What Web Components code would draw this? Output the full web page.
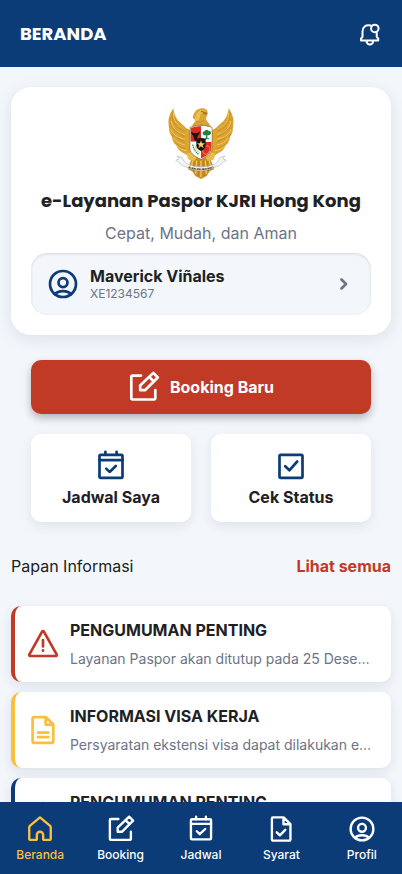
<!DOCTYPE html>
<html lang="id">
<head>
<meta charset="utf-8">
<meta name="viewport" content="width=device-width, initial-scale=1">
<title>Beranda</title>
<style>
  :root {
    --navy: #0b3c78;
    --red: #c13a26;
    --yellow: #fbbf3d;
    --ink: #202124;
    --muted: #6c7486;
    --surface: #f3f7fc;
  }
  body {
    margin: 0;
    background: var(--surface);
    color: var(--ink);
    font-family: Inter, "Liberation Sans", sans-serif;
    font-size: 16px;
    line-height: 24px;
  }
</style>
</head>
<body>
<home-page></home-page>

<script>
const ICONS = {
  user: '<circle cx="16" cy="16" r="13"/><circle cx="16" cy="14.6" r="4.5"/><path d="M8 26.3c1.8-2.400 4.7-3.200 8-3.200s6.200.8 8 3.200"/>',
  edit: '<path d="M13 4.600H4.500a1.200 1.200 0 0 0-1.200 1.200v21.500a1.200 1.200 0 0 0 1.200 1.200h21.600a1.200 1.200 0 0 0 1.200-1.200V19"/><path d="M12.200 19.200v-4.700L25.300 1.900l4.500 4.600-12.800 12.700zM21.200 5.900l4.500 4.600"/>',
  calendar: '<rect x="4.500" y="4.800" width="23" height="23" rx="1.300"/><path d="M4.500 10.200h23M10.400 1.800v3M21.600 1.800v3M11.200 18.600l3.400 3.300 6.200-5.900"/>',
  check: '<rect x="4.500" y="4.800" width="23" height="23" rx="1.300"/><path d="M10.200 16.300l4.200 4 7.800-8.800"/>',
  warning: '<path d="M15.100 3.700 2.400 26.300a1.100 1.100 0 0 0 1 1.700h25.200a1.100 1.100 0 0 0 1-1.700L16.900 3.700a1.050 1.050 0 0 0-1.800 0z"/><path d="M16 12v6.500M16 22.400v.300"/>',
  file: '<path d="M19 3.200H6.800a1.200 1.200 0 0 0-1.200 1.200v23.200a1.200 1.200 0 0 0 1.200 1.200h18.300a1.200 1.200 0 0 0 1.200-1.200V10.500zM18.600 3.200v7.400h7.500M11 18.700h10.300M11 23.200h10.300"/>',
  filecheck: '<path d="M19 2.700H6.800a1.200 1.200 0 0 0-1.200 1.200v24.200a1.200 1.200 0 0 0 1.200 1.200h18.800a1.200 1.200 0 0 0 1.200-1.200V10.500zM18.800 2.700v7.900h7.800M11.200 19.800l3.500 3.400 6.200-6.200"/>',
  home: '<path d="M16 2.800 4.400 12.400a2 2 0 0 0-.700 1.500v13.200a1.400 1.400 0 0 0 1.400 1.400h6.500a.8.8 0 0 0 .8-.8v-5a3.600 3.600 0 0 1 7.200 0v5a.8.8 0 0 0 .8.8h6.500a1.400 1.400 0 0 0 1.400-1.400V13.900a2 2 0 0 0-.700-1.500z"/>',
  bell: '<path d="M17 4.700c-7-1.700-11 2.300-11 8v7L4 22.300v2.400h23v-2.400l-2-2.600v-5.500M11.500 24.900v.8a4.300 4.300 0 0 0 8.600 0v-.8"/><circle cx="22.400" cy="8.600" r="5"/>',
  chevron: '<path d="M13.500 11.500l4.500 4.500-4.500 4.500"/>'
};

class AppIcon extends HTMLElement {
  connectedCallback() {
    this.attachShadow({ mode: 'open' });
    this.shadowRoot.innerHTML = `
      <style>
        :host { display: block; flex: none; width: 32px; height: 32px; }
        svg {
          display: block;
          width: 100%;
          height: 100%;
          fill: none;
          stroke: currentColor;
          stroke-width: 2.700;
          stroke-linecap: round;
          stroke-linejoin: round;
        }
      </style>
      <svg viewBox="0 0 32 32" aria-hidden="true">${ICONS[this.getAttribute('name')]}</svg>
    `;
  }
}
customElements.define('app-icon', AppIcon);

class GarudaEmblem extends HTMLElement {
  connectedCallback() {
    // one wing, mirrored for the other side
    const wing = `
      <path fill="#dca531" d="M38 24C24 43 20 66 26 82c-2 10 2 20 8 27 0 10 5 20 13 26 2 9 8 16 16 20l24 14 17-12V87C91 92 78 87 71 78 62 67 43 62 38 24z"/>
      <g fill="none" stroke="#b8842a" stroke-width="2">
        <path d="M34 35c-1 27 10 47 37 58M28 53c0 26 15 45 43 56M26 76c4 20 19 36 45 46M32 101c8 17 21 26 40 34M43 126c9 11 19 17 34 20"/>
      </g>
      <g fill="none" stroke="#f3cb5e" stroke-width="3">
        <path d="M38 38c0 23 12 38 35 48M31 62c4 20 18 34 41 41M30 87c6 15 20 25 42 30M38 112c8 11 19 18 35 22M49 137c9 9 17 12 30 14"/>
      </g>
      <path fill="none" stroke="#a27426" stroke-width="1" d="M41 50c7 21 19 31 38 38M43 84l30 25M48 112l27 17"/>`;
    this.attachShadow({ mode: 'open' });
    this.shadowRoot.innerHTML = `
      <style>
        :host { display: block; width: 72px; height: 72px; }
        svg { display: block; width: 100%; height: 100%; }
      </style>
      <svg viewBox="13 20 216 216" role="img" aria-label="Garuda Pancasila">
        <g>${wing}</g>
        <g transform="translate(242 0) scale(-1 1)">${wing}</g>
        <path fill="#c88e24" d="M94 170l-12 37 13 6 9 14 17 9 17-9 9-14 13-6-12-37z"/>
        <path stroke="#f0c75a" stroke-width="4" d="M96 181l-5 25M108 181l-3 40M121 181v50M134 181l3 40M146 181l5 25"/>
        <path stroke="#a27426" stroke-width="1.500" d="M102 181l-4 33M115 181l-2 46M128 181l2 46M140 181l4 33"/>
        <path fill="#dca531" d="M88 86l17-26-9-8c3-18 15-30 32-28 9 1 13 7 13 13 0 7-4 12-6 19l21 30z"/>
        <path fill="#ebc054" d="M104 50c3-13 12-22 23-21 5 1 9 4 9 8l-16 4-5 17-13 11z"/>
        <path fill="#a8782a" d="M128 33l13 5-5 5-10-3z"/>
        <path fill="none" stroke="#b8842a" stroke-width="2" d="M104 62l13 4 14-5M98 72l12 5 12-5 12 5 11-6"/>
        <circle cx="124" cy="34" r="2" fill="#3a2911"/>
        <path fill="#e9bc4a" d="M77 160l15-6 17 15-8 13-17-4zM165 160l-15-6-17 15 8 13 17-4z"/>
        <path fill="#f4f5f6" stroke="#b5b8bd" stroke-width="2" d="M84 193c-9-4-16-11-20-22l-15-4 7 8-11 5c11 3 15 17 29 19 7 1 12 4 17 6 20 7 40 7 60 0 5-2 10-5 17-6 14-2 18-16 29-19l-11-5 7-8-15 4c-4 11-11 18-20 22-24 9-50 9-74 0z"/>
        <path fill="none" stroke="#55524e" stroke-width="5" stroke-dasharray="4 1 2 2 6 1" d="M84 200c25 9 49 9 74 0"/>
        <path fill="#fff" stroke="#806136" stroke-width="2" d="M88 81c24-7 43-7 66 0v65c0 15-20 25-33 31-13-6-33-16-33-31z"/>
        <path fill="#df2c22" d="M90 83c12-3 21-5 31-5v46H90zM121 124h31v21c0 14-18 23-31 29z"/>
        <path fill="#fff" d="M121 78c10 0 20 2 31 5v41h-31zM90 124h31v50c-13-6-31-15-31-29z"/>
        <path fill="#191412" d="M92 93c3 5 7 6 12 4 5 2 10 1 13-4 1 8-2 11-6 13l-2 12-4 5-4-5-3-12c-4-2-7-5-6-13z"/>
        <path fill="#218044" d="M127 102c-3-5 1-9 5-9 1-5 10-6 12-1 6-1 9 5 6 9-3 5-9 4-13 3-3 2-8 2-10-2zM136 103h4v11h6v3h-15v-3l5-1z"/>
        <path fill="none" stroke="#378b45" stroke-width="4" stroke-dasharray="4 2" d="M96 133c3 14 9 23 19 30"/>
        <path fill="none" stroke="#c9a547" stroke-width="3" stroke-dasharray="3 2" d="M105 139c1 8 5 14 12 19"/>
        <ellipse cx="137" cy="149" rx="10" ry="13" transform="rotate(28 137 149)" fill="none" stroke="#e9a13a" stroke-width="3" stroke-dasharray="5 1"/>
        <path fill="#171413" d="M107 116c9-4 19-4 28 0v20c0 8-8 13-14 16-6-3-14-8-14-16z"/>
        <path fill="#f8d25b" d="M121 120l3 9h9l-7 6 3 9-8-6-8 6 3-9-7-6h9z"/>
      </svg>
    `;
  }
}
customElements.define('garuda-emblem', GarudaEmblem);

class TopBar extends HTMLElement {
  connectedCallback() {
    this.attachShadow({ mode: 'open' });
    this.shadowRoot.innerHTML = `
      <style>
        :host { display: block; flex: none; }
        header {
          display: flex;
          align-items: center;
          justify-content: space-between;
          padding: 20px 20px 19px;
          background: var(--navy);
          color: white;
        }
        h1 {
          margin: 0;
          font: 700 18px/28px Poppins, Inter, sans-serif;
        }
        button {
          display: block;
          padding: 0;
          border: 0;
          background: none;
          color: inherit;
        }
        app-icon { width: 24px; height: 24px; }
      </style>
      <header>
        <h1><slot></slot></h1>
        <button type="button" aria-label="Notifikasi"><app-icon name="bell"></app-icon></button>
      </header>
    `;
  }
}
customElements.define('top-bar', TopBar);

class WelcomeCard extends HTMLElement {
  connectedCallback() {
    this.attachShadow({ mode: 'open' });
    this.shadowRoot.innerHTML = `
      <style>
        :host { display: block; }
        section {
          display: flex;
          flex-direction: column;
          align-items: center;
          padding: 20px;
          border-radius: 20px;
          background: white;
          box-shadow: 0 4px 16px rgba(20, 30, 60, 0.1);
        }
        h2 {
          margin: 8px 0 6px;
          font: 700 18px/28px Poppins, Inter, sans-serif;
          white-space: nowrap;
        }
        p { margin: 0 0 8px; color: var(--muted); }
        button {
          box-sizing: border-box;
          display: flex;
          align-items: center;
          gap: 11px;
          width: 100%;
          padding: 11px;
          padding-left: 16px;
          border: 0;
          border-radius: 16px;
          background: var(--surface);
          box-shadow: inset 0 1px 3px rgba(20, 30, 60, 0.14);
          font: inherit;
          color: var(--muted);
          text-align: left;
        }
        .user { color: var(--navy); }
        .info { display: flex; flex: 1; flex-direction: column; }
        .name { color: var(--ink); font-weight: 700; }
        .number { padding-bottom: 4px; font-size: 12px; line-height: 12px; }
      </style>
      <section>
        <garuda-emblem></garuda-emblem>
        <h2>e-Layanan Paspor KJRI Hong Kong</h2>
        <p>Cepat, Mudah, dan Aman</p>
        <button type="button">
          <app-icon class="user" name="user"></app-icon>
          <span class="info">
            <span class="name">Maverick Viñales</span>
            <span class="number">XE1234567</span>
          </span>
          <app-icon name="chevron"></app-icon>
        </button>
      </section>
    `;
  }
}
customElements.define('welcome-card', WelcomeCard);

class ActionButton extends HTMLElement {
  connectedCallback() {
    this.attachShadow({ mode: 'open' });
    this.shadowRoot.innerHTML = `
      <style>
        :host { display: block; }
        button {
          display: flex;
          flex-direction: column;
          align-items: center;
          width: 100%;
          padding: 16px 0 13px;
          gap: 3px;
          border: 0;
          border-radius: 10px;
          background: white;
          box-shadow: 0 4px 12px rgba(20, 30, 60, 0.09);
          color: var(--ink);
          font: inherit;
          font-weight: 700;
        }
        app-icon { color: var(--navy); }
        :host([primary]) button {
          flex-direction: row;
          justify-content: center;
          gap: 10px;
          padding: 11px 0;
          background: var(--red);
          color: white;
          box-shadow: 0 4px 8px rgba(0, 0, 0, 0.28);
        }
        :host([primary]) app-icon { color: white; }
      </style>
      <button type="button">
        <app-icon name="${this.getAttribute('icon')}"></app-icon>
        <span><slot></slot></span>
      </button>
    `;
  }
}
customElements.define('action-button', ActionButton);

class NewsCard extends HTMLElement {
  connectedCallback() {
    this.attachShadow({ mode: 'open' });
    this.shadowRoot.innerHTML = `
      <style>
        :host { display: block; color: var(--${this.getAttribute('tone')}); }
        article {
          display: flex;
          align-items: center;
          gap: 11px;
          padding: 12px 18px 12px 12px;
          border-left: 4px solid;
          border-radius: 10px;
          background: white;
          box-shadow: 0 4px 12px rgba(20, 30, 60, 0.1);
        }
        .text { flex: 1; min-width: 0; }
        h3 {
          margin: 0 0 7px;
          color: var(--ink);
          font-size: 16px;
          font-weight: 700;
          line-height: 24px;
        }
        p {
          margin: 0;
          padding-bottom: 1px;
          overflow: hidden;
          color: var(--muted);
          font-size: 14px;
          line-height: 20px;
          text-overflow: ellipsis;
          white-space: nowrap;
        }
      </style>
      <article>
        <app-icon name="${this.getAttribute('icon')}"></app-icon>
        <div class="text">
          <h3><slot name="title"></slot></h3>
          <p><slot></slot></p>
        </div>
      </article>
    `;
  }
}
customElements.define('news-card', NewsCard);

class BottomNav extends HTMLElement {
  connectedCallback() {
    const items = [
      ['home', 'Beranda'],
      ['edit', 'Booking'],
      ['calendar', 'Jadwal'],
      ['filecheck', 'Syarat'],
      ['user', 'Profil']
    ];
    this.attachShadow({ mode: 'open' });
    this.shadowRoot.innerHTML = `
      <style>
        :host { display: block; flex: none; background: var(--navy); }
        nav {
          display: grid;
          grid-template-columns: repeat(5, 1fr);
          padding: 13px 0 11px;
        }
        a {
          display: flex;
          flex-direction: column;
          align-items: center;
          gap: 4px;
          color: white;
          font-size: 12px;
          font-weight: 500;
          line-height: 16px;
          text-decoration: none;
        }
        a[aria-current] { color: var(--yellow); }
        app-icon { width: 28px; height: 28px; }
      </style>
      <nav>
        ${items.map(([icon, label], i) => `
          <a href="#${label.toLowerCase()}"${i === 0 ? ' aria-current="page"' : ''}>
            <app-icon name="${icon}"></app-icon>
            <span>${label}</span>
          </a>`).join('')}
      </nav>
    `;
  }
}
customElements.define('bottom-nav', BottomNav);

class HomePage extends HTMLElement {
  connectedCallback() {
    this.attachShadow({ mode: 'open' });
    this.shadowRoot.innerHTML = `
      <style>
        :host { display: flex; flex-direction: column; height: 100vh; }
        main {
          flex: 1;
          min-height: 0;
          overflow-y: auto;
          scrollbar-width: none;
          padding: 20px 11px;
        }
        .actions {
          display: grid;
          grid-template-columns: 1fr 1fr;
          gap: 20px;
          margin: 25px 20px 32px;
        }
        .actions [primary] { grid-column: 1 / -1; }
        .heading {
          display: flex;
          justify-content: space-between;
          margin-bottom: 28px;
        }
        h2 { margin: 0; font-size: 16px; font-weight: 400; }
        .heading a { color: var(--red); font-weight: 700; text-decoration: none; }
        .news { display: flex; flex-direction: column; gap: 10px; }
      </style>
      <top-bar>BERANDA</top-bar>
      <main>
        <welcome-card></welcome-card>
        <div class="actions">
          <action-button primary icon="edit">Booking Baru</action-button>
          <action-button icon="calendar">Jadwal Saya</action-button>
          <action-button icon="check">Cek Status</action-button>
        </div>
        <div class="heading">
          <h2>Papan Informasi</h2>
          <a href="#informasi">Lihat semua</a>
        </div>
        <div class="news">
          <news-card tone="red" icon="warning">
            <span slot="title">PENGUMUMAN PENTING</span>Layanan Paspor akan ditutup pada 25 Desember
          </news-card>
          <news-card tone="yellow" icon="file">
            <span slot="title">INFORMASI VISA KERJA</span>Persyaratan ekstensi visa dapat dilakukan elektronik
          </news-card>
          <news-card tone="navy" icon="warning">
            <span slot="title">PENGUMUMAN PENTING</span>Layanan Paspor akan ditutup pada 25 Desember
          </news-card>
        </div>
      </main>
      <bottom-nav></bottom-nav>
    `;
  }
}
customElements.define('home-page', HomePage);
</script>
</body>
</html>
